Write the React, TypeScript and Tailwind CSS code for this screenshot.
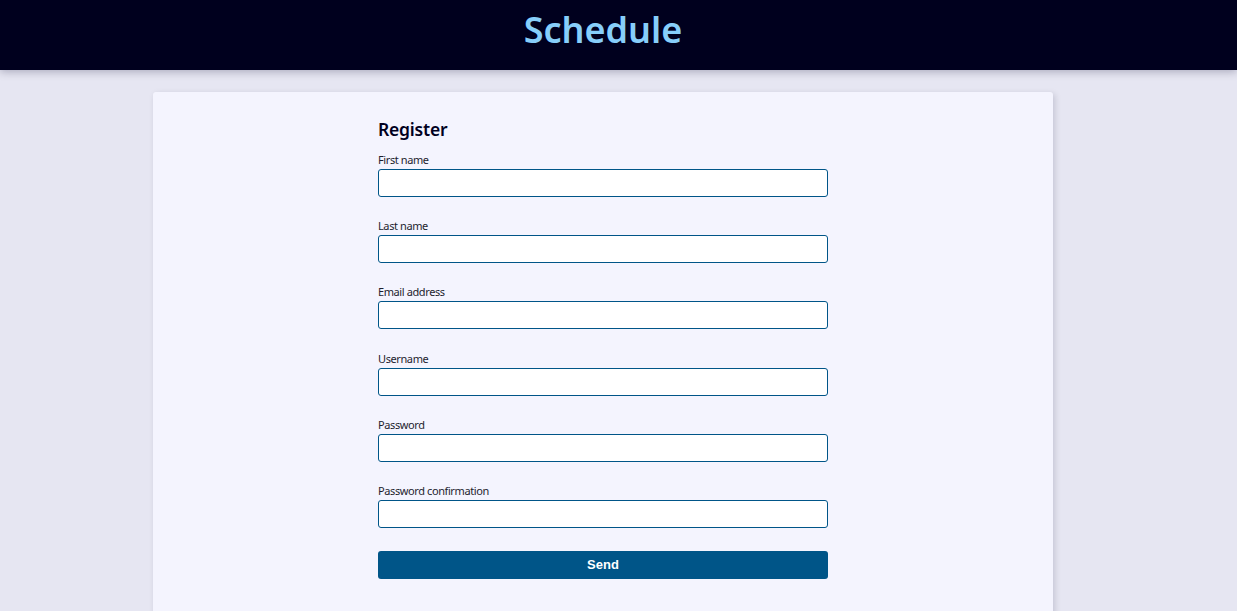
import { FC } from "react";

const fields = [
  { id: "first-name", label: "First name", type: "text" },
  { id: "last-name", label: "Last name", type: "text" },
  { id: "email", label: "Email address", type: "email" },
  { id: "username", label: "Username", type: "text" },
  { id: "password", label: "Password", type: "password" },
  { id: "password-confirmation", label: "Password confirmation", type: "password" },
];

const App: FC = () => {
  return (
    <div className="min-h-[611px] bg-[#e6e6f2] font-['Noto_Sans',sans-serif]">
      <header className="relative z-10 h-[70px] bg-[#00001e] shadow-[0_2px_8px_rgba(0,0,40,0.25)]">
        <div className="ml-[153px] w-[900px] text-center">
          <h1 className="pt-[7px] text-[36px] font-semibold leading-[46px] text-[#87cefa]">
            Schedule
          </h1>
        </div>
      </header>
      <main className="pt-[22px] pl-[153px]">
        <div className="w-[900px] h-[540px] rounded-t-[3px] bg-[#f4f4fe] shadow-[2px_2px_6px_rgba(0,0,40,0.15)]">
          <form className="mx-auto w-[450px] pt-[26px]">
            <h2 className="mb-[13px] text-[17.5px] font-semibold leading-[22px] tracking-[-0.2px] text-[#00001e]">
              Register
            </h2>
            {fields.map((field) => (
              <div key={field.id} className="mb-[22.2px] flex flex-col">
                <label
                  htmlFor={field.id}
                  className="mb-[3px] text-[11px] leading-[13px] tracking-[-0.4px] text-[#1e1e2e]"
                >
                  {field.label}
                </label>
                <input
                  id={field.id}
                  name={field.id}
                  type={field.type}
                  className="block h-[28px] w-full rounded-[3px] border border-[#005588] bg-white px-2 text-sm focus:outline-none"
                />
              </div>
            ))}
            <button
              type="submit"
              className="mt-px h-[28px] w-full rounded-[3px] bg-[#005588] font-['Liberation_Sans',sans-serif] text-[13px] font-bold text-white"
            >
              Send
            </button>
          </form>
        </div>
      </main>
    </div>
  );
};

export default App;
